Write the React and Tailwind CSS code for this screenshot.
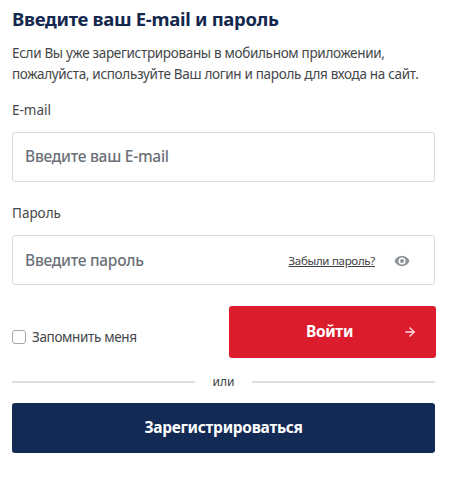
import { ArrowRight } from 'lucide-react';

const font = "font-['Noto_Sans','Open_Sans',sans-serif]";

function EyeIcon() {
  return (
    <svg width="16" height="12" viewBox="0 0 16 12" aria-hidden="true">
      <path
        fillRule="evenodd"
        fill="#8f9499"
        d="M8 .8C4.600.8 1.700 2.900.5 6c1.200 3.100 4.100 5.200 7.500 5.200s6.300-2.100 7.500-5.200C14.300 2.900 11.400.8 8 .8zM8 9.500A3.500 3.500 0 1 1 8 2.500a3.500 3.500 0 0 1 0 7zM8 4a2 2 0 1 0 0 4a2 2 0 0 0 0-4z"
      />
    </svg>
  );
}

export default function App() {
  return (
    <div className={`${font} w-[452px] h-[493px] bg-white px-3 pt-[6px] overflow-hidden`}>
      <h1 className="text-[18.5px] leading-[26px] font-bold text-[#14284f] tracking-[-0.3px]">Введите ваш E-mail и пароль</h1>

      <p className="mt-[11px] w-[423px] text-[13.5px] leading-[21px] text-[#444749] tracking-[-0.32px]">
        Если Вы уже зарегистрированы в мобильном приложении, пожалуйста, используйте Ваш логин и пароль для входа на сайт.
      </p>

      {/* E-mail */}
      <label className="block mt-[15px] text-[13.5px] leading-[20px] text-[#444749]">E-mail</label>
      <div className="mt-[12px] w-[423px] h-[50px] flex items-center px-3 border border-[#dcdcdc] rounded-[3px]">
        <span className="text-[15.5px] font-medium text-[#6b7177] tracking-[-0.25px]">Введите ваш E-mail</span>
      </div>

      {/* Пароль */}
      <label className="block mt-[21px] text-[13.5px] leading-[20px] text-[#444749]">Пароль</label>
      <div className="mt-[12px] w-[423px] h-[50px] flex items-center pl-3 pr-[24px] pt-[2px] border border-[#dcdcdc] rounded-[3px]">
        <span className="text-[15.5px] font-medium text-[#6b7177] tracking-[-0.25px]">Введите пароль</span>
        <a className="ml-auto text-[11.5px] text-[#3d4043] underline tracking-[-0.3px]">Забыли пароль?</a>
        <span className="ml-[19px] flex"><EyeIcon /></span>
      </div>

      <div className="mt-[21px] flex w-[424px] justify-between">
        <label className="flex items-center gap-[6px] mt-[21px] h-[20px]">
          <span className="w-[14px] h-[14px] border border-[#a8a8a8] rounded-[3px] bg-white" />
          <span className="text-[13.5px] text-[#444749] tracking-[-0.35px]">Запомнить меня</span>
        </label>
        <button className="relative w-[207px] h-[52px] bg-[#da1c2c] rounded-[3px] text-white text-[15.5px] font-bold tracking-[-0.3px] flex items-center justify-center pr-[6px]">
          Войти
          <ArrowRight size={14} strokeWidth={2.4} className="absolute right-[19px] text-[#fbdfe1]" />
        </button>
      </div>

      <div className="mt-[14px] flex w-[423px] items-center">
        <div className="flex-1 h-[2px] bg-[#dedede]" />
        <span className="w-[57px] pt-[1px] text-center text-[12px] leading-[18px] text-[#3d4043]">или</span>
        <div className="flex-1 h-[2px] bg-[#dedede]" />
      </div>

      <button className="mt-[12px] w-[423px] h-[50px] bg-[#132a55] rounded-[3px] text-white text-[15.5px] font-bold tracking-[-0.3px] flex items-center justify-center">
        Зарегистрироваться
      </button>
    </div>
  );
}
